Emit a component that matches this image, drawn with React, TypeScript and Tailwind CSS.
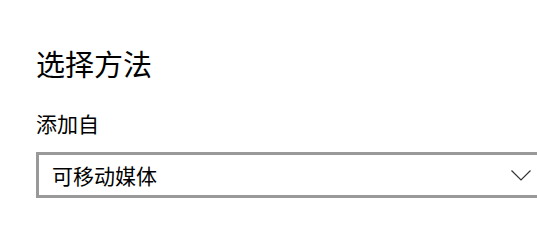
const font = { fontFamily: '"Noto Sans CJK SC", "Noto Sans", sans-serif' };

function Chevron() {
  return (
    <svg width="20" height="11" viewBox="0 0 20 11" fill="none" className="shrink-0">
      <path d="M0.5 0.5 L10 10 L19.5 0.5" stroke="#333" strokeWidth="1.2" />
    </svg>
  );
}

export default function App() {
  return (
    <div className="h-[235px] w-full overflow-hidden bg-white pl-[36px] pt-[43px] text-black" style={font}>
      <h1 className="text-[29px] leading-[40px] font-normal">选择方法</h1>
      <p className="mt-[26px] text-[21px] leading-[28px]">添加自</p>
      <div className="mt-[15px] flex h-[46px] w-[512px] items-center justify-between border-[3px] border-[#999999] pl-[13px] pr-[14px]">
        <span className="text-[21px] leading-[28px]">可移动媒体</span>
        <Chevron />
      </div>
    </div>
  );
}
